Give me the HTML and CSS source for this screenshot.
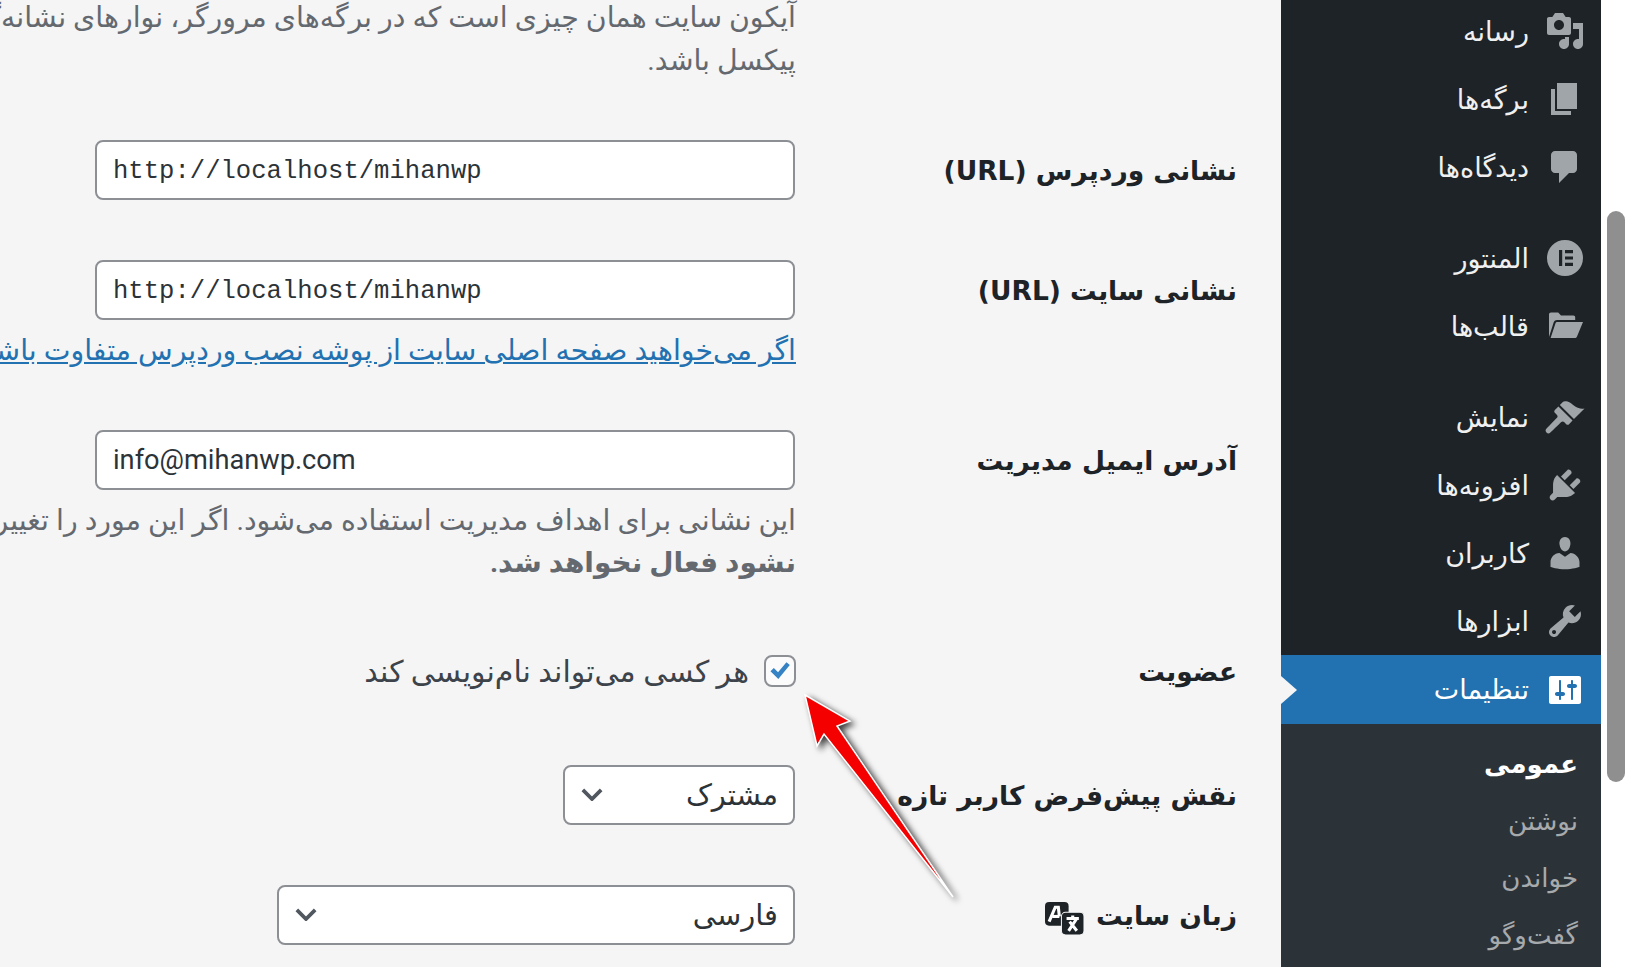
FILE: index.html
```html
<!DOCTYPE html>
<html lang="fa">
<head>
<meta charset="utf-8">
<title>تنظیمات عمومی</title>
<link rel="stylesheet" href="styles.css">
</head>
<body>
<div class="screen">
  <main class="main" dir="rtl">
    <div class="para first">
      <p class="desc">آیکون سایت همان چیزی است که در برگه‌های مرورگر، نوارهای نشانه‌گذاری و در برنامه‌های موبایل وردپرس می‌بینید.</p>
      <p class="desc">پیکسل باشد.</p>
    </div>
    <div class="row row-url1">
      <div class="label">نشانی وردپرس (URL)</div>
      <div class="cell"><div class="field mono" dir="ltr">http://localhost/mihanwp</div></div>
    </div>
    <div class="row row-url2">
      <div class="label">نشانی سایت (URL)</div>
      <div class="cell">
        <div class="field mono" dir="ltr">http://localhost/mihanwp</div>
        <p class="desc link">اگر می‌خواهید صفحه اصلی سایت از پوشه نصب وردپرس متفاوت باشد، اینجا را ببینید</p>
      </div>
    </div>
    <div class="row row-mail">
      <div class="label">آدرس ایمیل مدیریت</div>
      <div class="cell">
        <div class="field sans" dir="ltr">info@mihanwp.com</div>
        <p class="desc mail-desc">این نشانی برای اهداف مدیریت استفاده می‌شود. اگر این مورد را تغییر دهید، ایمیلی برای تأیید فرستاده می‌شود.</p>
        <p class="desc strong">نشود فعال نخواهد شد.</p>
      </div>
    </div>
    <div class="row row-member">
      <div class="label">عضویت</div>
      <div class="cell check-cell">
        <span class="checkbox">
          <svg viewBox="0 0 20 20" class="check"><path d="M3.2 10.2l2.4-2.3 3 3 6-7.2 2.4 2-8.2 10z"/></svg>
        </span>
        <span class="check-label">هر کسی می‌تواند نام‌نویسی کند</span>
      </div>
    </div>
    <div class="row row-role">
      <div class="label">نقش پیش‌فرض کاربر تازه</div>
      <div class="cell">
        <div class="select select-role"><span>مشترک</span><svg viewBox="0 0 24 14" class="chev"><path d="M2 2l10 10L22 2"/></svg></div>
      </div>
    </div>
    <div class="row row-lang">
      <div class="label lang-label">زبان سایت
        <svg viewBox="0 0 38 32" class="trans">
          <rect x="0" y="0" width="23" height="23" rx="4"/>
          <rect x="16" y="10" width="22" height="22" rx="4" class="trans-front"/>
          <path d="M4 19L10 5h3l1 9" class="trans-w"/><path d="M7 14h7" class="trans-w"/>
          <path d="M21 16h12M27 13v3M23 28l8-12M31 28l-7-9" class="trans-w"/>
        </svg>
      </div>
      <div class="cell">
        <div class="select select-lang"><span>فارسی</span><svg viewBox="0 0 24 14" class="chev"><path d="M2 2l10 10L22 2"/></svg></div>
      </div>
    </div>
    <svg class="arrow" viewBox="0 0 170 220">
      <path d="M5 5L50 31 37 36 153 207 24 44 17 56z"/>
    </svg>
  </main>

  <nav class="sidebar" dir="rtl">
    <ul class="menu">
      <li class="item"><svg class="ico" viewBox="0 0 20 20"><path d="M13 11V4c0-.55-.45-1-1-1h-1.67L9 1H5L3.67 3H2c-.55 0-1 .45-1 1v7c0 .55.45 1 1 1h10c.55 0 1-.45 1-1zM7 4.5c1.38 0 2.5 1.12 2.5 2.5S8.38 9.5 7 9.5 4.5 8.38 4.5 7 5.62 4.5 7 4.5zM14 6h5v10.5c0 1.38-1.12 2.5-2.5 2.5S14 17.88 14 16.5s1.12-2.5 2.5-2.5c.17 0 .34.02.5.05V9h-3V6zm-4 8.05V13h2v3.5c0 1.38-1.12 2.5-2.5 2.5S7 17.88 7 16.5 8.12 14 9.5 14c.17 0 .34.02.5.05z"/></svg><span>رسانه</span></li>
      <li class="item"><svg class="ico" viewBox="0 0 20 20"><path d="M6 15V2h10v13H6zm-1 1h8v2H3V5h2v11z"/></svg><span>برگه‌ها</span></li>
      <li class="item"><svg class="ico" viewBox="0 0 20 20"><path d="M5 2h9q.82 0 1.41.59T16 4v7q0 .82-.59 1.41T14 13h-2l-5 5v-5H5q-.82 0-1.41-.59T3 11V4q0-.82.59-1.41T5 2z"/></svg><span>دیدگاه‌ها</span></li>
      <li class="sep"></li>
      <li class="item"><svg class="ico" viewBox="0 0 20 20"><path fill-rule="evenodd" d="M10 1a9 9 0 1 0 0 18 9 9 0 0 0 0-18zM7 6h1.6v8H7V6zm3 0h4v1.6h-4V6zm0 3.2h4v1.6h-4V9.2zm0 3.2h4V14h-4v-1.6z"/></svg><span>المنتور</span></li>
      <li class="item"><svg class="ico" viewBox="0 0 20 20"><path d="M2 15.5V4.2C2 3.600 2.400 3.200 3 3.200h3.600L8 4.800h6.200c.5 0 .9.4.9.9V7H6c-.8 0-1.300.4-1.600 1L2 15.500zM6 8h13l-3 7.200c-.2.5-.7.8-1.200.8H2.800L5.300 8.500C5.400 8.200 5.700 8 6 8z"/></svg><span>قالب‌ها</span></li>
      <li class="sep"></li>
      <li class="item"><svg class="ico" viewBox="0 0 20 20"><path d="M14.48 11.06L7.41 3.99l1.5-1.5c.5-.56 2.3-.47 3.51.32 1.21.8 1.43 1.28 2.91 2.1 1.18.64 2.45 1.26 4.45.85zm-.71.71L6.7 4.7 4.93 6.47c-.39.39-.39 1.02 0 1.41l1.06 1.06c.39.39.39 1.03 0 1.42-.6.6-5.36 5.56-5.36 5.56-.51.53-.41 1.34.1 1.85.51.51 1.32.6 1.85.1 0 0 4.96-4.76 5.56-5.36.39-.39 1.03-.39 1.42 0l1.06 1.06c.39.39 1.02.39 1.41 0z"/></svg><span>نمایش</span></li>
      <li class="item"><svg class="ico" viewBox="0 0 20 20"><path d="M13.11 4.36L9.87 7.6 8 5.73l3.24-3.24c.35-.34 1.05-.2 1.56.32.52.51.66 1.21.31 1.55zm-8 1.77l.91-1.12 9.01 9.01-1.19.84c-.71.71-2.63 1.16-3.82 1.16H6.14L4.9 17.26c-.59.59-1.54.59-2.12 0-.59-.58-.59-1.53 0-2.12l1.24-1.24v-3.88c0-1.13.4-3.19 1.09-3.89zm7.26 3.97l3.24-3.24c.34-.35 1.04-.21 1.55.31.52.51.66 1.21.31 1.55l-3.24 3.25z"/></svg><span>افزونه‌ها</span></li>
      <li class="item"><svg class="ico" viewBox="0 0 20 20"><path d="M10 9.25c-2.27 0-2.73-3.44-2.73-3.44C7 4.02 7.82 2 9.97 2c2.16 0 2.98 2.02 2.71 3.81 0 0-.41 3.44-2.68 3.44zm0 2.57L12.72 10c2.39 0 4.52 2.33 4.52 4.53v2.49s-3.65 1.13-7.24 1.13c-3.65 0-7.24-1.13-7.24-1.13v-2.49c0-2.25 1.94-4.48 4.47-4.48z"/></svg><span>کاربران</span></li>
      <li class="item"><svg class="ico" viewBox="0 0 20 20"><path d="M16.68 9.77c-1.34 1.34-3.3 1.67-4.95.99l-5.41 6.52c-.99.99-2.59.99-3.58 0s-.99-2.59 0-3.57l6.52-5.42c-.68-1.65-.35-3.61.99-4.95 1.28-1.28 3.12-1.62 4.72-1.06l-2.89 2.89 2.82 2.82 2.86-2.87c.53 1.58.18 3.39-1.08 4.65zM3.81 16.21c.4.39 1.04.39 1.43 0 .4-.4.4-1.04 0-1.43-.39-.4-1.03-.4-1.43 0-.39.39-.39 1.03 0 1.43z"/></svg><span>ابزارها</span></li>
      <li class="item active"><svg class="ico" viewBox="0 0 20 20"><path d="M18 16V4c0-.55-.45-1-1-1H3c-.55 0-1 .45-1 1v12c0 .55.45 1 1 1h14c.55 0 1-.45 1-1zM8 11h1c.55 0 1 .45 1 1s-.45 1-1 1H8v1.500c0 .28-.22.5-.5.5s-.5-.22-.5-.5V13H6c-.55 0-1-.45-1-1s.45-1 1-1h1V5.500c0-.28.22-.5.5-.5s.5.22.5.5V11zm5-2h-1c-.55 0-1-.45-1-1s.45-1 1-1h1V5.500c0-.28.22-.5.5-.5s.5.22.5.5V7h1c.55 0 1 .45 1 1s-.45 1-1 1h-1v5.500c0 .28-.22.5-.5.5s-.5-.22-.5-.5V9z"/></svg><span>تنظیمات</span></li>
    </ul>
    <ul class="submenu">
      <li class="sub current">عمومی</li>
      <li class="sub">نوشتن</li>
      <li class="sub">خواندن</li>
      <li class="sub">گفت‌وگو</li>
    </ul>
  </nav>

  <div class="scrolltrack"><div class="thumb"></div></div>
</div>
</body>
</html>
```

FILE: styles.css
```css
* { box-sizing: border-box; }
html, body { margin: 0; height: 100%; overflow: hidden; }
body {
  background: #f5f5f5;
  color: #3c434a;
  font-family: "Roboto", "DejaVu Sans", sans-serif;
}
ul { list-style: none; margin: 0; padding: 0; }
p { margin: 0; }

.screen { display: flex; height: 967px; }

/* main column */
.main {
  flex: 1;
  min-width: 0;
  position: relative;
  overflow: hidden;
  padding-right: 44px;
}
.para.first { margin-top: -4px; padding-right: 441px; }
.desc {
  font-size: 28.4px;
  line-height: 43px;
  color: #646970;
  white-space: nowrap;
}
.row { display: flex; align-items: flex-start; }
.label {
  flex: 0 0 441px;
  font-family: "DejaVu Sans", sans-serif;
  font-size: 26.5px;
  font-weight: 700;
  line-height: 62px;
  color: #1d2327;
  white-space: nowrap;
}
.cell { flex: 1; min-width: 0; }

.row-url1 { margin-top: 58px; }
.row-url2 { margin-top: 58px; }
.row-mail { margin-top: 58px; }
.row-member { margin-top: 58px; }
.row-role { margin-top: 62px; }
.row-lang { margin-top: 58px; }

.field {
  width: 700px;
  height: 60px;
  margin-right: 1px;
  background: #fff;
  border: 2px solid #8c8f94;
  border-radius: 8px;
  padding: 0 16px;
  line-height: 59px;
  color: #2c3338;
  text-align: left;
  white-space: nowrap;
}
.mono { font-family: "Liberation Mono", monospace; font-size: 25.6px; }
.sans { font-family: "Roboto", sans-serif; font-size: 27.2px; line-height: 57px; }

.link { color: #2271b1; text-decoration: underline; margin-top: 9px; }
.mail-desc { margin-top: 9px; }
.strong { font-size: 28px; font-weight: 700; line-height: 41px; }

.check-cell { display: flex; align-items: center; height: 60px; gap: 15px; }
.checkbox {
  flex: none;
  width: 32px;
  height: 32px;
  background: #fbfbfb;
  border: 2px solid #8c8f94;
  border-radius: 8px;
  display: flex;
}
.check { width: 100%; height: 100%; fill: #3582c4; }
.check-label { font-size: 30px; color: #3c434a; white-space: nowrap; }

.select {
  display: flex;
  align-items: center;
  justify-content: space-between;
  height: 60px;
  margin-right: 1px;
  background: #fff;
  border: 2px solid #8c8f94;
  border-radius: 8px;
  padding: 0 15px 0 16px;
  font-size: 29px;
  color: #2c3338;
}
.select-role { width: 232px; }
.select-lang { width: 518px; }
.chev { width: 22px; height: 13px; margin-bottom: 2px; fill: none; stroke: #50575e; stroke-width: 4; }

.lang-label { display: flex; align-items: center; gap: 12px; }
.trans { width: 39px; height: 33px; margin-top: 5px; fill: #1d2327; }
.trans-front { stroke: #f5f5f5; stroke-width: 1; }
.trans-w { fill: none; stroke: #fff; stroke-width: 3; }

.arrow {
  position: absolute;
  left: 800px;
  top: 690px;
  width: 170px;
  height: 220px;
  overflow: visible;
  fill: #f50000;
  stroke: #fff;
  stroke-width: 1.500;
  filter: drop-shadow(4px 3px 3px rgba(0, 0, 0, .75));
}

/* admin sidebar */
.sidebar {
  flex: 0 0 320px;
  background: #1d2327;
  overflow: hidden;
  font-family: "DejaVu Sans", sans-serif;
}
.menu { margin-top: -3px; }
.item {
  display: flex;
  align-items: center;
  height: 68px;
  padding-right: 16px;
  gap: 16px;
  font-size: 27px;
  color: #f0f0f1;
  position: relative;
}
.ico { flex: none; width: 40px; height: 40px; fill: #a0a5aa; }
.sep { height: 23px; }
.active { height: 69px; background: #2271b1; color: #fff; }
.active .ico { fill: #fff; }
.active::before {
  content: "";
  position: absolute;
  left: 0;
  top: 21px;
  border-style: solid;
  border-width: 14px 0 14px 16px;
  border-color: transparent transparent transparent #f5f5f5;
}
.submenu { background: #2c3338; padding: 13px 23px 0 0; height: 260px; }
.sub { height: 57px; line-height: 55px; font-size: 26px; color: #a7aaad; }
.current { color: #fff; font-weight: 700; }

/* page scrollbar */
.scrolltrack { flex: 0 0 30px; background: #fff; padding: 211px 6px 0; }
.thumb { width: 18px; height: 571px; background: #8f8f8f; border-radius: 9px; }
```
